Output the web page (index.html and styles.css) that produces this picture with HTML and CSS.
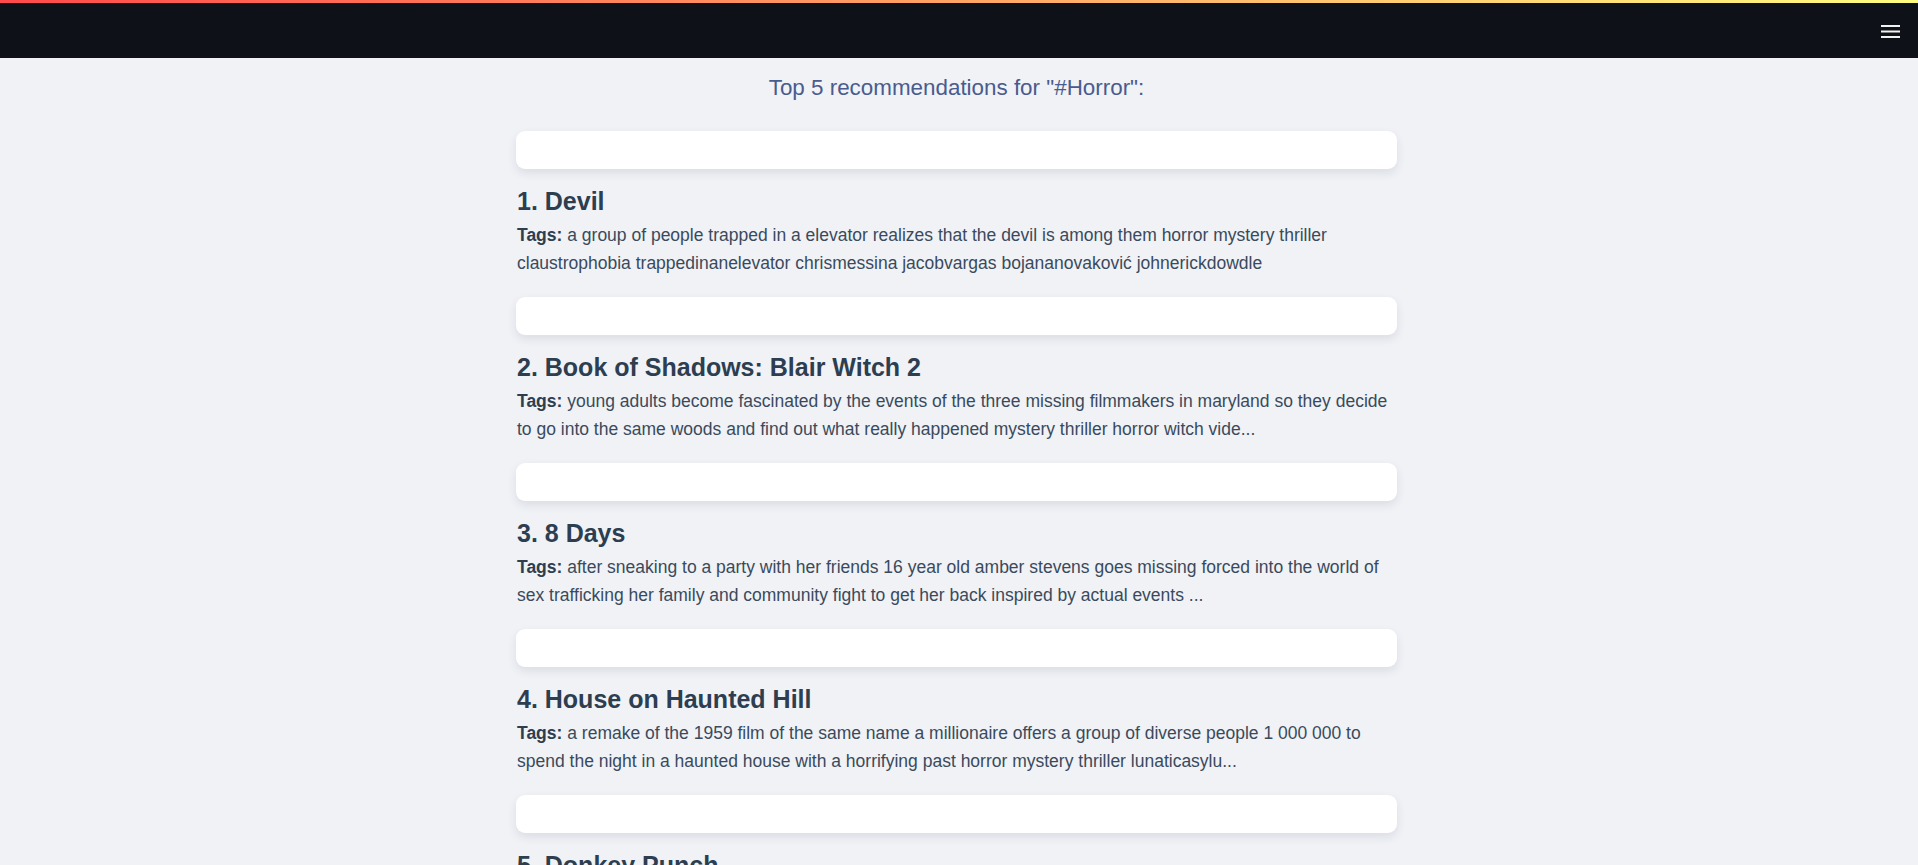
FILE: index.html
```html
<!DOCTYPE html>
<html lang="en">
<head>
<meta charset="utf-8">
<title>Recommendations</title>
<link rel="stylesheet" href="styles.css">
</head>
<body>
<header class="app-header">
  <div class="decoration"></div>
  <div class="toolbar">
    <button class="menu-btn" aria-label="Menu">
      <svg width="19" height="14" viewBox="0 0 19 14"><rect x="0" y="0" width="19" height="2" fill="#f2f2f2"/><rect x="0" y="5.5" width="19" height="2" fill="#f2f2f2"/><rect x="0" y="11" width="19" height="2" fill="#f2f2f2"/></svg>
    </button>
  </div>
</header>
<main class="main">
  <div class="content">
    <h3 class="page-title">Top 5 recommendations for "#Horror":</h3>
    <ul class="results">
      <li class="item">
        <div class="card"></div>
        <h2 class="item-title">1. Devil</h2>
        <p class="tags"><strong>Tags:</strong> a group of people trapped in a elevator realizes that the devil is among them horror mystery thriller claustrophobia trappedinanelevator chrismessina jacobvargas bojananovaković johnerickdowdle</p>
      </li>
      <li class="item">
        <div class="card"></div>
        <h2 class="item-title">2. Book of Shadows: Blair Witch 2</h2>
        <p class="tags"><strong>Tags:</strong> young adults become fascinated by the events of the three missing filmmakers in maryland so they decide to go into the same woods and find out what really happened mystery thriller horror witch vide...</p>
      </li>
      <li class="item">
        <div class="card"></div>
        <h2 class="item-title">3. 8 Days</h2>
        <p class="tags"><strong>Tags:</strong> after sneaking to a party with her friends 16 year old amber stevens goes missing forced into the world of sex trafficking her family and community fight to get her back inspired by actual events ...</p>
      </li>
      <li class="item">
        <div class="card"></div>
        <h2 class="item-title">4. House on Haunted Hill</h2>
        <p class="tags"><strong>Tags:</strong> a remake of the 1959 film of the same name a millionaire offers a group of diverse people 1 000 000 to spend the night in a haunted house with a horrifying past horror mystery thriller lunaticasylu...</p>
      </li>
      <li class="item">
        <div class="card"></div>
        <h2 class="item-title">5. Donkey Punch</h2>
        <p class="tags"><strong>Tags:</strong> a group of friends on a yacht party in the mediterranean face a deadly turn of events horror thriller...</p>
      </li>
    </ul>
  </div>
</main>
</body>
</html>
```

FILE: styles.css
```css
* { box-sizing: border-box; }

html, body {
  margin: 0;
  padding: 0;
}

body {
  background: #f0f2f6;
  font-family: "Liberation Sans", Arial, sans-serif;
  color: #3a4a5c;
  overflow: hidden;
}

.app-header {
  height: 58px;
  background: #0e1117;
  display: flex;
  flex-direction: column;
}

.decoration {
  height: 3px;
  background: linear-gradient(90deg, rgb(255, 75, 75), rgb(255, 253, 128));
}

.toolbar {
  flex: 1;
  display: flex;
  justify-content: flex-end;
  align-items: flex-start;
  padding: 22px 18px 0 0;
}

.menu-btn {
  background: none;
  border: 0;
  padding: 0;
  margin: 0;
  width: 19px;
  height: 14px;
  display: block;
  cursor: pointer;
}

.menu-btn svg { display: block; }

.main {
  padding-right: 5px;
}

.content {
  width: 881px;
  margin: 0 auto;
  padding-top: 17px;
}

.page-title {
  margin: 0 0 30px;
  font-size: 22.4px;
  line-height: 26.4px;
  font-weight: 400;
  text-align: center;
  color: #4a5b8e;
}

.results {
  list-style: none;
  margin: 0;
  padding: 0;
}

.item {
  padding-bottom: 20.5px;
}

.card {
  height: 38px;
  background: #ffffff;
  border-radius: 9px;
  box-shadow: 0 4px 10px rgba(30, 40, 70, 0.10);
}

.item-title {
  margin: 17px 0 0 1px;
  font-size: 25px;
  line-height: 30px;
  font-weight: 700;
  color: #2c3e50;
}

.tags {
  margin: 4.5px 0 0 1px;
  font-size: 17.5px;
  line-height: 28px;
  color: #3a4a5c;
}

.tags strong {
  color: #2c3e50;
  font-weight: 700;
}
```
